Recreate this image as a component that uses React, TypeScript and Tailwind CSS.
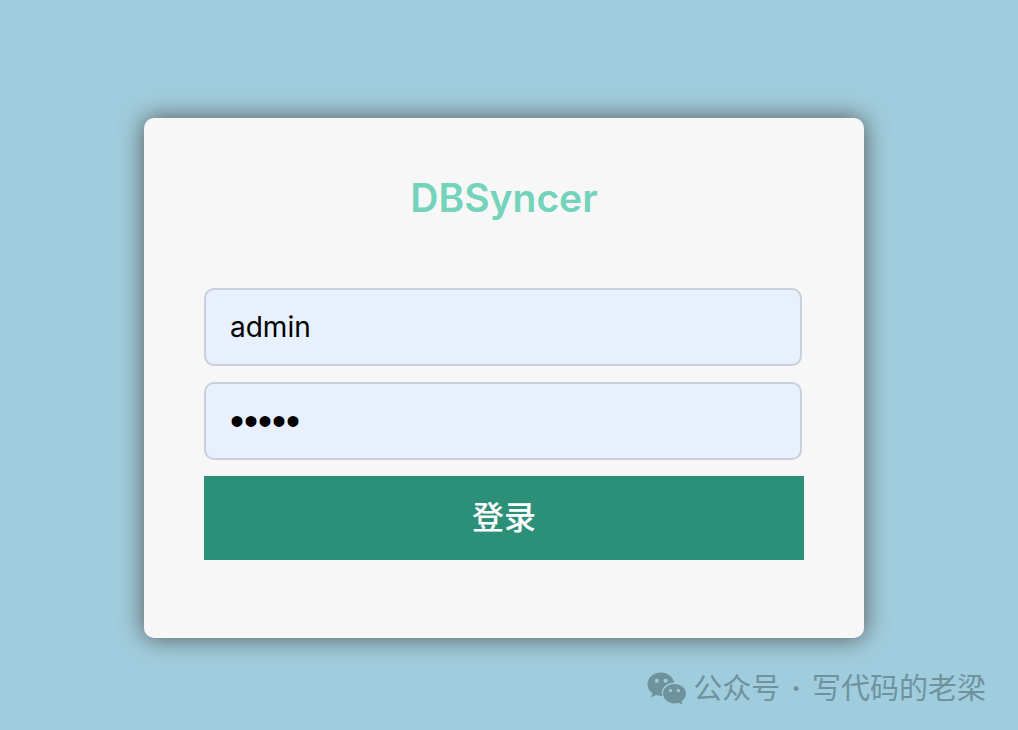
function WeChatIcon() {
  return (
    <svg viewBox="0 0 40 34" className="h-[34px] w-10" fill="currentColor" aria-hidden="true">
      <path
        fillRule="evenodd"
        d="M14 .5C6.300 .5 .5 5.700 .5 12.300c0 3.700 1.900 7 5 9.100L4.200 25.500l4.800-2.400c1.700.5 3.300.8 5 .8h1.300a10.500 10.500 0 0 1-.4-2.700c0-5.800 5.300-10.400 12-10.400h.5C26.200 5 20.700 .5 14 .5ZM9.700 6.700a2 2 0 1 1 0 4 2 2 0 0 1 0-4Zm8.900 0a2 2 0 1 1 0 4 2 2 0 0 1 0-4Z"
      />
      <path
        fillRule="evenodd"
        d="M27.500 12C21.100 12 16 16.300 16 21.600s5.100 9.900 11.500 9.900c1.400 0 2.800-.3 4.100-.7l3.900 2-1-3.300c2.800-1.900 4.500-4.600 4.500-7.900C39 16.300 33.900 12 27.500 12Zm-4 4.900a1.700 1.700 0 1 1 0 3.400 1.700 1.700 0 0 1 0-3.400Zm7.900 0a1.700 1.700 0 1 1 0 3.400 1.700 1.700 0 0 1 0-3.400Z"
      />
    </svg>
  );
}

export default function App() {
  return (
    <div className="flex min-h-screen flex-col bg-[#a0cddd] font-['Inter','Noto_Sans_CJK_SC',sans-serif]">
      <main className="flex justify-center pt-[118px] pr-[10px]">
        <form
          className="flex w-full max-w-[720px] flex-col rounded-[10px] bg-[#f7f7f7] px-[60px] pt-[52px] pb-[78px] shadow-[0_0_24px_#555]"
          onSubmit={(e) => e.preventDefault()}
        >
          <h1 className="mb-[62px] text-center text-[39px] leading-[56px] font-semibold text-[#73d3bb]">
            DBSyncer
          </h1>
          <div className="flex flex-col gap-4 pr-[2px]">
            <input
              aria-label="用户名"
              type="text"
              defaultValue="admin"
              className="h-[78px] rounded-[10px] border-2 border-[#c8d0dc] bg-[#e8f0fe] px-6 text-[28px] text-black outline-none"
            />
            <input
              aria-label="密码"
              type="password"
              defaultValue="admin"
              className="h-[78px] rounded-[10px] border-2 border-[#c8d0dc] bg-[#e8f0fe] px-6 font-['Liberation_Sans',sans-serif] text-[40px] text-black outline-none"
            />
          </div>
          <button type="submit" className="mt-4 h-[84px] bg-[#2b9077] text-[32px] font-medium text-white">
            登录
          </button>
        </form>
      </main>
      <footer className="mt-auto flex items-center justify-end gap-[6px] pr-8 pb-5 text-[#6f929d]">
        <WeChatIcon />
        <p className="flex gap-[11px] text-[29px] leading-[42px]">
          <span>公众号</span>
          <span className="font-bold">·</span>
          <span>写代码的老梁</span>
        </p>
      </footer>
    </div>
  );
}
